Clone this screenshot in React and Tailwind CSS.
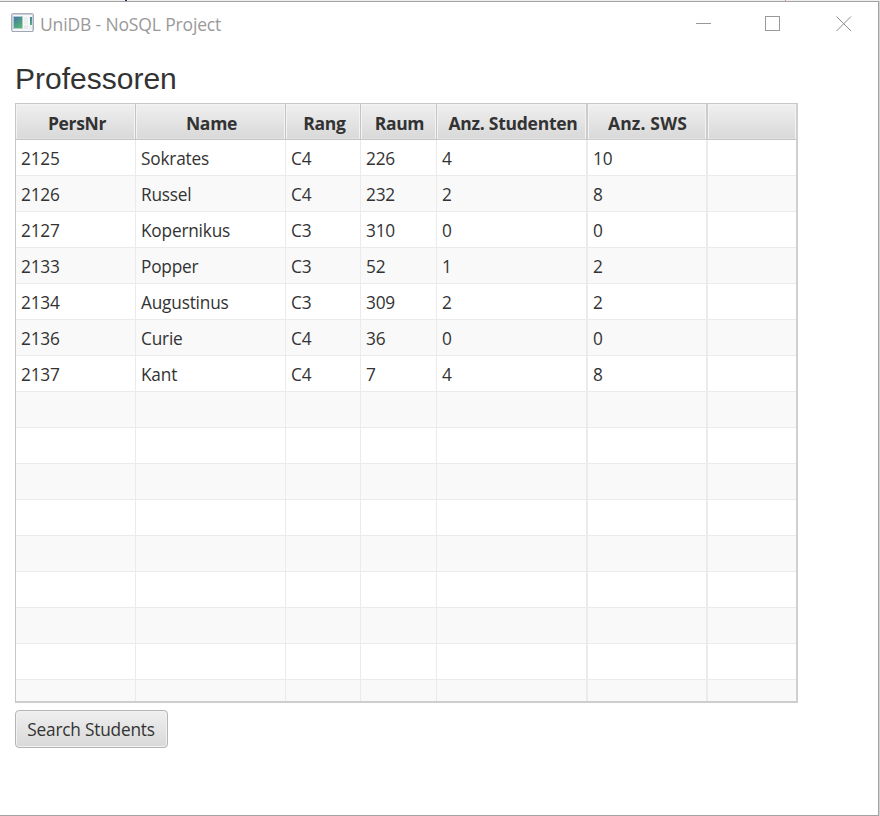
import React from "react";

const columns = [
  { title: "PersNr", width: "w-[120px]", head: "pl-[3px] tracking-[-0.35px]", line: "border-r", rule: "border-[#c4c4c4]" },
  { title: "Name", width: "w-[150px]", head: "pl-[2px] tracking-[-0.28px]", line: "border-r", rule: "border-[#c4c4c4]" },
  { title: "Rang", width: "w-[75px]", head: "pl-[3px] tracking-[-0.28px]", line: "border-r", rule: "border-[#c4c4c4]" },
  { title: "Raum", width: "w-[76px]", head: "pl-[2px] tracking-[-0.35px]", line: "border-r", rule: "border-[#c4c4c4]" },
  { title: "Anz. Studenten", width: "w-[151px]", head: "pl-[3px] tracking-[-0.26px]", line: "border-r-2", rule: "border-[#cccccc]" },
  { title: "Anz. SWS", width: "w-[120px]", head: "pl-[1px] tracking-[0.15px]", line: "border-r-2", rule: "border-[#cccccc]" },
  { title: "", width: "w-[88px]", head: "", line: "", rule: "border-[#c4c4c4]" },
];

const professors = [
  ["2125", "Sokrates", "C4", "226", "4", "10"],
  ["2126", "Russel", "C4", "232", "2", "8"],
  ["2127", "Kopernikus", "C3", "310", "0", "0"],
  ["2133", "Popper", "C3", "52", "1", "2"],
  ["2134", "Augustinus", "C3", "309", "2", "2"],
  ["2136", "Curie", "C4", "36", "0", "0"],
  ["2137", "Kant", "C4", "7", "4", "8"],
];

const rows = Array.from({ length: 16 }, (_, i) => professors[i] ?? []);

function AppIcon() {
  return (
    <svg width="23" height="20" viewBox="0 0 23 20" className="mt-[2px] shrink-0">
      <defs>
        <linearGradient id="pane" x1="0" y1="0" x2="0.6" y2="1">
          <stop offset="0" stopColor="#4373ab" />
          <stop offset="1" stopColor="#58b373" />
        </linearGradient>
      </defs>
      <rect x="0.5" y="0.5" width="22" height="18" rx="1" fill="#f6f7f8" stroke="#a9b0bc" />
      <path d="M1 1.5h21M1.5 2v16M21.5 2v16" stroke="#ccd2dc" />
      <path d="M1 18.5h21" stroke="#a0a8b5" />
      <rect x="2.5" y="3.5" width="9" height="12" fill="url(#pane)" stroke="#b5cfd0" strokeWidth="0.6" />
      <rect x="13" y="4" width="4" height="7" fill="#edf0ee" />
      <rect x="13" y="12" width="4" height="4" fill="#e8ebea" />
      <rect x="19" y="4" width="2" height="8" fill="url(#pane)" />
      <rect x="18.5" y="13" width="2.5" height="3" fill="#edf0ee" />
    </svg>
  );
}

function TitleBar() {
  return (
    <header className="flex h-[46px] items-start pl-[11px]">
      <div className="flex pt-[9px]">
        <AppIcon />
        <span className="ml-[6px] mt-[1px] h-6 whitespace-nowrap text-[17.5px] leading-6 tracking-[-0.15px] text-[#999999]">
          UniDB - NoSQL Project
        </span>
      </div>
      <div className="ml-auto mr-[26px] flex gap-[53px] pt-[14px]">
        <svg width="16" height="16" fill="none" stroke="#999" shapeRendering="crispEdges">
          <path d="M0 7.5h15" />
        </svg>
        <svg width="16" height="16" fill="none" stroke="#999" shapeRendering="crispEdges">
          <rect x="0.5" y="0.5" width="14" height="14" />
        </svg>
        <svg width="16" height="16" className="ml-[2px]" fill="none" stroke="#8c8c8c">
          <path d="M0.5 0.5L15 15M15 0.5L0.5 15" />
        </svg>
      </div>
    </header>
  );
}

function ProfessorTable() {
  return (
    <div className="flex h-[600px] w-[783px] flex-col overflow-hidden border border-b-2 border-r-2 border-[#c8c8c8] border-b-[#cdcdcd] border-r-[#d0d0d0] bg-white">
      <div className="flex h-9 shrink-0">
        {columns.map((c, i) => (
          <div key={i} className={`${c.width} ${c.line} ${c.rule} shrink-0 border-b`}>
            <div
              className={`${c.head} flex h-full items-center justify-center whitespace-nowrap border border-[#f3f3f3] border-b-[#e3e3e3] bg-linear-to-b from-[#efefef] to-[#d9d9d9] pt-[3px] text-[17.5px] font-bold`}
            >
              {c.title}
            </div>
          </div>
        ))}
      </div>
      {rows.map((row, r) => (
        <div key={r} className={`flex h-9 shrink-0 ${r % 2 ? "bg-[#f9f9f9]" : "bg-white"}`}>
          {columns.map((c, i) => (
            <div
              key={i}
              className={`${c.width} ${c.line} flex shrink-0 items-center border-b border-[#ebebeb] pl-[5px] pt-[2px] text-[17.25px] tracking-[-0.2px]`}
            >
              {row[i]}
            </div>
          ))}
        </div>
      ))}
    </div>
  );
}

export default function App() {
  return (
    <div className="h-[816px] w-[880px] overflow-hidden bg-[#d2d2d2] font-['Open_Sans','Noto_Sans',sans-serif] text-[#333333]">
      <div className="flex h-px">
        <div className="w-[125px] bg-[#eeeeee]" />
        <div className="w-[2px] bg-[#1e3158]" />
        <div className="w-[658px] bg-[#eeeeee]" />
        <div className="w-px bg-[#e08a8a]" />
        <div className="flex-1 bg-[#eeeeee]" />
      </div>
      <div className="h-[815px] w-[879px] border-b border-r border-t border-[#a3a3a3] bg-white">
        <TitleBar />
        <main className="pl-[15px]">
          <h1 className="h-[55px] pt-[13px] font-['Liberation_Sans',Arial,sans-serif] text-[30px] leading-[36px]">
            Professoren
          </h1>
          <ProfessorTable />
          <button className="mt-[7px] flex h-[38px] w-[153px] items-center justify-center whitespace-nowrap rounded-[4px] border border-[#b5b5b5] bg-linear-to-b from-[#efefef] to-[#d9d9d9] pr-[1px] pt-[2px] text-[17.25px] tracking-[-0.2px] shadow-[inset_0_0_0_1px_#f1f1f1]">
            Search Students
          </button>
        </main>
      </div>
    </div>
  );
}
